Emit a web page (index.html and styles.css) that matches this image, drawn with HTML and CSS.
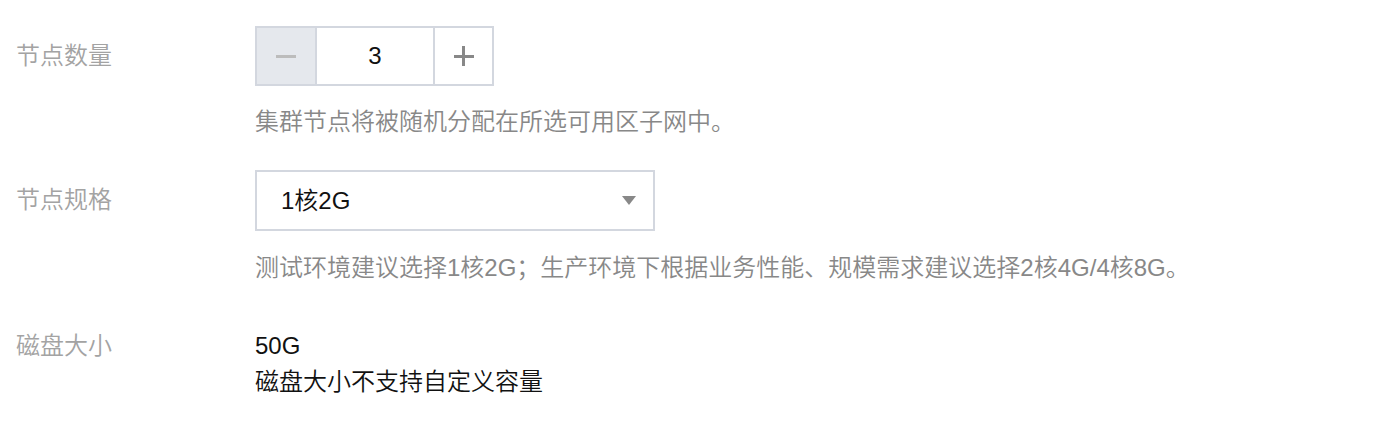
FILE: index.html
```html
<!DOCTYPE html>
<html lang="zh">
<head>
<meta charset="utf-8">
<link rel="stylesheet" href="styles.css">
</head>
<body>
<div class="form">
  <div class="row row-count">
    <div class="label tall">节点数量</div>
    <div class="control">
      <div class="stepper">
        <div class="step-btn minus"><span class="minus-bar"></span></div>
        <div class="step-value">3</div>
        <div class="step-btn plus"><span class="plus-h"></span><span class="plus-v"></span></div>
      </div>
      <div class="help">集群节点将被随机分配在所选可用区子网中。</div>
    </div>
  </div>
  <div class="row row-spec">
    <div class="label tall">节点规格</div>
    <div class="control">
      <div class="select">
        <span class="select-text">1核2G</span>
        <span class="caret"></span>
      </div>
      <div class="help">测试环境建议选择1核2G；生产环境下根据业务性能、规模需求建议选择2核4G/4核8G。</div>
    </div>
  </div>
  <div class="row row-disk">
    <div class="label">磁盘大小</div>
    <div class="control">
      <div class="value">50G</div>
      <div class="value">磁盘大小不支持自定义容量</div>
    </div>
  </div>
</div>
</body>
</html>
```
FILE: styles.css
```css
html, body {
  margin: 0;
  padding: 0;
  background: #fff;
}
body {
  font-family: "Liberation Sans", "Noto Sans CJK SC", sans-serif;
  font-size: 24px;
  font-weight: 350;
  line-height: 36px;
  color: #222;
}
.form {
  padding: 26px 0 0 16px;
}
.row {
  display: flex;
}
.row-spec {
  margin-top: 30px;
}
.row-disk {
  margin-top: 42px;
}
.label {
  width: 239px;
  flex: none;
  color: #a3a3a3;
}
.label.tall {
  line-height: 60px;
}
.control {
  display: flex;
  flex-direction: column;
  align-items: flex-start;
}
.stepper {
  display: flex;
  height: 60px;
  box-sizing: border-box;
  border: 2px solid #d3d7df;
}
.step-btn {
  display: flex;
  align-items: center;
  justify-content: center;
  position: relative;
}
.minus {
  width: 58px;
  background: #e5e8ed;
  border-right: 2px solid #d3d7df;
}
.minus-bar {
  width: 20px;
  height: 3px;
  background: #bcbcbc;
}
.step-value {
  width: 116px;
  display: flex;
  align-items: center;
  justify-content: center;
  color: #111;
}
.plus {
  width: 57px;
  border-left: 2px solid #d3d7df;
}
.plus-h {
  position: absolute;
  width: 20px;
  height: 3px;
  background: #888;
}
.plus-v {
  position: absolute;
  width: 3px;
  height: 20px;
  background: #888;
}
.help {
  margin-top: 18px;
  color: #888;
}
.row-spec .help {
  margin-top: 19px;
}
.select {
  width: 400px;
  height: 61px;
  box-sizing: border-box;
  border: 2px solid #d3d7df;
  display: flex;
  align-items: center;
  justify-content: space-between;
  padding: 0 17px 0 24px;
  color: #111;
}
.caret {
  width: 0;
  height: 0;
  border-left: 7px solid transparent;
  border-right: 7px solid transparent;
  border-top: 9px solid #888;
}
.value {
  color: #111;
}
```
